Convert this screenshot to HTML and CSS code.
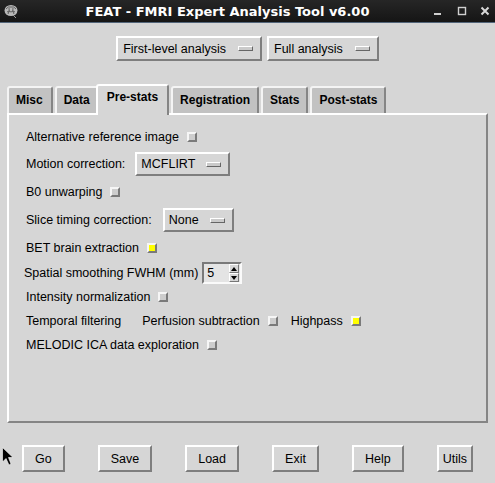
FILE: index.html
```html
<!DOCTYPE html>
<html>
<head>
<meta charset="utf-8">
<link rel="stylesheet" href="styles.css">
</head>
<body>
<div class="titlebar">
  <div class="app-icon">
    <svg width="16" height="16" viewBox="0 0 16 16">
      <ellipse cx="8" cy="7.5" rx="6.5" ry="5.5" fill="#b8b8b8"/>
      <path d="M3 6 Q5 3 8 4 Q11 3 13 6 M4 9 Q6 7 8 9 Q10 7 12 9 M6 5 Q7 8 5 11 M10 5 Q9 8 11 11" stroke="#555" stroke-width="0.9" fill="none"/>
      <path d="M10 12 L13 15" stroke="#999" stroke-width="1"/>
    </svg>
  </div>
  <div class="title">FEAT - FMRI Expert Analysis Tool v6.00</div>
  <div class="wm">
    <svg width="10" height="10" viewBox="0 0 10 10"><rect x="1" y="7" width="7" height="2" fill="#cfcfcf"/></svg>
    <svg width="10" height="10" viewBox="0 0 10 10"><rect x="1.5" y="1.5" width="7" height="7" fill="none" stroke="#cfcfcf" stroke-width="1.4"/></svg>
    <svg width="10" height="10" viewBox="0 0 10 10"><path d="M1.5 1.5 L8.5 8.5 M8.5 1.5 L1.5 8.5" stroke="#d8d8d8" stroke-width="2"/></svg>
  </div>
</div>

<div class="top-menus">
  <div class="menubtn top">First-level analysis<span class="ind"></span></div>
  <div class="menubtn top">Full analysis<span class="ind"></span></div>
</div>

<div class="tabs">
  <div class="tab first">Misc</div>
  <div class="tab">Data</div>
  <div class="tab active">Pre-stats</div>
  <div class="tab">Registration</div>
  <div class="tab">Stats</div>
  <div class="tab">Post-stats</div>
</div>

<div class="panel">
  <div class="row r24">Alternative reference image<span class="chk"></span></div>
  <div class="row r30">Motion correction:<div class="menubtn inpanel m-motion">MCFLIRT<span class="ind"></span></div></div>
  <div class="row r26">B0 unwarping<span class="chk"></span></div>
  <div class="row r30">Slice timing correction:<div class="menubtn inpanel m-slice">None<span class="ind"></span></div></div>
  <div class="row r26">BET brain extraction<span class="chk on"></span></div>
  <div class="row r24 shift">Spatial smoothing FWHM (mm)
    <div class="spin">
      <span class="spin-val">5</span>
      <span class="spin-arrows">
        <span class="arrow up"></span>
        <span class="arrow down"></span>
      </span>
    </div>
  </div>
  <div class="row r24">Intensity normalization<span class="chk"></span></div>
  <div class="row r24">Temporal filtering<span class="sub">Perfusion subtraction</span><span class="chk"></span><span class="sub2">Highpass</span><span class="chk on"></span></div>
  <div class="row r24">MELODIC ICA data exploration<span class="chk"></span></div>
</div>

<div class="actions">
  <div class="btn">Go</div>
  <div class="btn">Save</div>
  <div class="btn">Load</div>
  <div class="btn">Exit</div>
  <div class="btn">Help</div>
  <div class="btn narrow">Utils</div>
</div>

<svg class="cursor" width="12" height="20" viewBox="0 0 12 20">
  <polygon points="0.5,0.5 0.5,15 4,11.5 7,18 9,17 6.5,10.5 11,10.5" fill="#000" stroke="#fff" stroke-width="0.6"/>
</svg>
</body>
</html>
```

FILE: styles.css
```css
html, body {
  margin: 0;
  padding: 0;
}
body {
  width: 495px;
  height: 483px;
  overflow: hidden;
  position: relative;
  background: #d6d6d6;
  font-family: "Liberation Sans", Arial, sans-serif;
  font-size: 12.5px;
  color: #000;
}

/* title bar */
.titlebar {
  height: 22px;
  display: flex;
  align-items: center;
  background: linear-gradient(#262626, #151515);
  border-bottom: 1px solid #52657a;
}
.app-icon {
  width: 22px;
  display: flex;
  justify-content: center;
  align-items: center;
}
.title {
  flex: 1;
  text-align: center;
  color: #fff;
  font-family: "DejaVu Sans", sans-serif;
  font-weight: bold;
  font-size: 13px;
}
.wm {
  width: 62px;
  display: flex;
  align-items: center;
  justify-content: space-between;
  padding-right: 5px;
  box-sizing: border-box;
}

/* raised widgets */
.menubtn, .btn {
  box-sizing: border-box;
  border: 2px solid;
  border-color: #fff #7e7e7e #7e7e7e #fff;
  display: flex;
  align-items: center;
}
.menubtn {
  height: 25px;
  padding: 0 7px 0 5px;
  gap: 12px;
}
.menubtn.inpanel {
  height: 24px;
  padding: 0 7px 0 4px;
  gap: 11px;
}
.m-motion { margin-left: 10px; }
.m-slice { margin-left: 11px; }
.ind {
  width: 15px;
  height: 5px;
  box-sizing: border-box;
  border: 1px solid;
  border-color: #fff #666 #666 #fff;
  background: #cacaca;
}

.top-menus {
  display: flex;
  justify-content: center;
  gap: 5px;
  margin-top: 13px;
}

/* tabs */
.tabs {
  display: flex;
  align-items: flex-end;
  margin: 23px 7px 0;
  height: 29px;
}
.tab {
  height: 27px;
  box-sizing: border-box;
  padding: 5px 7px 0;
  line-height: 15px;
  background: #c2c2c2;
  border: 2px solid;
  border-bottom: none;
  border-color: #f4f4f4 #858585 transparent #f4f4f4;
  border-radius: 3px 3px 0 0;
  font-weight: bold;
  font-size: 12px;
  margin-right: 2px;
}
.tab.first { padding: 5px 8px 0 7px; }
.tab.active {
  position: relative;
  z-index: 1;
  height: 31px;
  margin-bottom: -2px;
  margin-left: -5px;
  padding: 4px 9px 0;
  background: #d6d6d6;
  border-color: #fff #858585 transparent #fff;
}

/* panel */
.panel {
  margin: 0 7px;
  height: 310px;
  box-sizing: border-box;
  border: 2px solid;
  border-color: #fff #858585 #858585 #fff;
  padding: 10px 0 0 17px;
}
.row {
  display: flex;
  align-items: center;
  white-space: nowrap;
}
.r24 { height: 24px; }
.r26 { height: 26px; }
.r30 { height: 30px; }
.shift { margin-left: -2px; }

.chk {
  width: 10px;
  height: 10px;
  box-sizing: border-box;
  border: 2px solid;
  border-color: #f6f6f6 #7a7a7a #7a7a7a #f6f6f6;
  background: #cdcdcd;
  margin-left: 8px;
}
.chk.on { background: #ffff00; }
.sub { margin-left: 21px; }
.sub2 { margin-left: 13px; }

.spin {
  margin-left: 4px;
  width: 40px;
  height: 22px;
  box-sizing: border-box;
  border: 2px solid;
  border-color: #7a7a7a #fafafa #fafafa #7a7a7a;
  background: #e4e4e4;
  display: flex;
  align-items: stretch;
}
.spin-val {
  flex: 1;
  padding-left: 3px;
  display: flex;
  align-items: center;
}
.spin-arrows {
  width: 10px;
  margin-right: 1px;
  display: flex;
  flex-direction: column;
}
.arrow {
  flex: 1;
  box-sizing: border-box;
  border: 1px solid;
  border-color: #fff #777 #777 #fff;
  background: #d6d6d6;
  position: relative;
}
.arrow::after {
  content: "";
  position: absolute;
  left: 1px;
  width: 0;
  height: 0;
  border-left: 3px solid transparent;
  border-right: 3px solid transparent;
}
.arrow.up::after {
  top: 2px;
  border-bottom: 4px solid #000;
}
.arrow.down::after {
  top: 2px;
  border-top: 4px solid #000;
}

/* bottom buttons */
.actions {
  display: flex;
  justify-content: space-between;
  margin-top: 22px;
  padding: 0 22px;
}
.btn {
  height: 27px;
  padding: 0 11px;
}
.btn.narrow { padding: 0 4px; }

.cursor {
  position: absolute;
  left: 2px;
  top: 447px;
}
```
